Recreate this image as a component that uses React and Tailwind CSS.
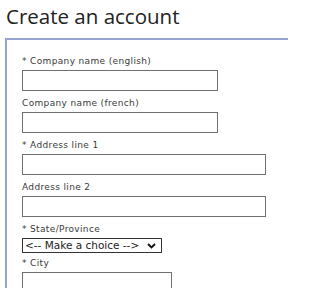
import React from "react";

function Field({ label, width, required }) {
  return (
    <div className="flex flex-col">
      <div className="h-[12px] mb-[3px] text-[9px] leading-[12px] tracking-[0.35px] text-[#3a3a3a]">
        {required ? "* " : ""}
        {label}
      </div>
      <div className={`h-[21px] mb-[6px] border border-[#707070] bg-white ${width}`}></div>
    </div>
  );
}

export default function App() {
  return (
    <div className="w-[288px] h-[288px] overflow-hidden bg-white" style={{ fontFamily: '"DejaVu Sans", Verdana, sans-serif' }}>
      <h1 className="pl-[6px] pt-[3px] h-[37px] text-[20.5px] leading-[26px] text-[#222]" style={{ fontFamily: '"Open Sans", "Noto Sans", sans-serif' }}>
        Create an account
      </h1>
      <div className="ml-[5px] mt-[1px] w-[320px] border-2 border-[#94a3d0] border-r-0 pl-[15px] pt-[15px] pb-[20px]">
        <Field required label="Company name (english)" width="w-[196px]" />
        <Field label="Company name (french)" width="w-[196px]" />
        <Field required label="Address line 1" width="w-[244px]" />
        <Field label="Address line 2" width="w-[244px]" />
        <div className="h-[12px] mb-[3px] text-[9px] leading-[12px] tracking-[0.35px] text-[#3a3a3a]">* State/Province</div>
        <div className="w-[140px] h-[15px] mb-[4px] border border-[#333] flex items-center justify-between pl-[2px] pr-[5px] text-[10.5px] leading-none text-[#222]">
          <span>&lt;-- Make a choice --&gt;</span>
          <svg width="9" height="6" viewBox="0 0 9 6"><path d="M1 1l3.5 3.5L8 1" fill="none" stroke="#111" strokeWidth="1.9" /></svg>
        </div>
        <div className="h-[12px] mb-[3px] text-[9px] leading-[12px] tracking-[0.35px] text-[#3a3a3a]">* City</div>
        <div className="w-[150px] h-[21px] border border-[#707070] bg-white"></div>
      </div>
    </div>
  );
}
